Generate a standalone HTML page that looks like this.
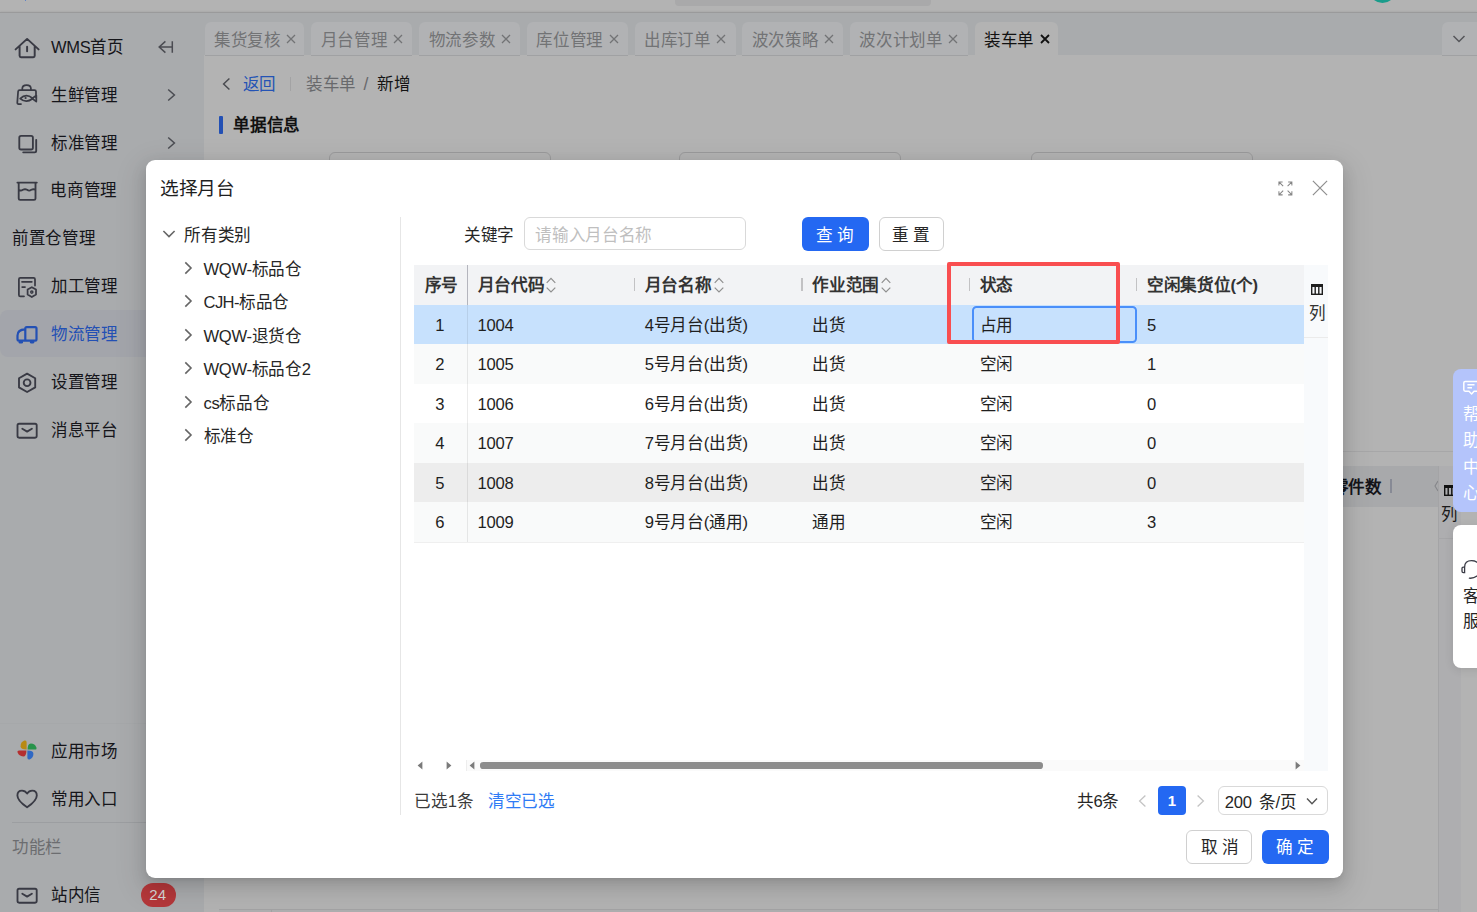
<!DOCTYPE html>
<html lang="zh-CN">
<head>
<meta charset="utf-8">
<title>装车单</title>
<style>
html,body{margin:0;padding:0}
body{width:1477px;height:912px;position:relative;overflow:hidden;background:#b3b3b3;font-family:"Liberation Sans",sans-serif;color:#141414}
*{box-sizing:border-box}
.a{position:absolute}
.t{position:absolute;white-space:nowrap;line-height:20px;height:20px;font-size:16.6px;letter-spacing:-0.3px}
.s{font-size:16.5px}
svg{position:absolute;overflow:visible}
#topstrip{left:0;top:0;width:1477px;height:12px;background:#b3b3b3}
#topline{left:0;top:11.5px;width:1477px;height:1.5px;background:#9a9a9b;box-shadow:0 -1px 1.5px rgba(0,0,0,.06)}
#side{left:0;top:13px;width:204px;height:899px;background:#a9abad}
#tabbar{left:204px;top:13px;width:1273px;height:42px;background:#a9abad}
.tab{position:absolute;top:22.3px;height:32.7px;background:#b1b2b4;border-radius:6px 6px 0 0;box-shadow:0 1px 0 #a0a1a3}
.tab .t{top:7.6px;color:#727375;font-size:16.5px}
.tab.on{background:#b3b3b3;box-shadow:none}
.tab.on .t{color:#111}
.si{color:#15151a;font-size:16.5px}
#modal{left:146px;top:160px;width:1197px;height:718px;background:#fff;border-radius:9px;box-shadow:0 6px 16px rgba(0,0,0,.13),0 3px 6px -4px rgba(0,0,0,.16),0 9px 28px 8px rgba(0,0,0,.08)}
.b{font-weight:bold}
</style>
</head>
<body>
<div class="a" id="topstrip"></div>
<div class="a" id="topline"></div>
<div class="a" id="side"></div>
<div class="a" id="tabbar"></div>
<div class="a" style="left:675px;top:0;width:256px;height:6px;background:#a9a9aa;border-radius:0 0 4px 4px"></div>
<div class="a" style="left:1369px;top:-24px;width:27px;height:27px;border-radius:50%;background:#1a9c8b"></div>
<div class="a" style="left:24.7px;top:0;width:1.6px;height:1.2px;background:#5f83c9"></div>
<div class="tab" style="left:204.5px;width:99.8px"><span class="t" style="left:9.5px">集货复核</span><svg style="left:81.8px;top:11.7px" width="10" height="10" viewBox="0 0 10 10"><path d="M1 1L9 9M9 1L1 9" stroke="#727375" stroke-width="1.3" fill="none"/></svg></div>
<div class="tab" style="left:311.1px;width:101.3px"><span class="t" style="left:9.5px">月台管理</span><svg style="left:81.8px;top:11.7px" width="10" height="10" viewBox="0 0 10 10"><path d="M1 1L9 9M9 1L1 9" stroke="#727375" stroke-width="1.3" fill="none"/></svg></div>
<div class="tab" style="left:419px;width:101.2px"><span class="t" style="left:9.5px">物流参数</span><svg style="left:81.8px;top:11.7px" width="10" height="10" viewBox="0 0 10 10"><path d="M1 1L9 9M9 1L1 9" stroke="#727375" stroke-width="1.3" fill="none"/></svg></div>
<div class="tab" style="left:526.8px;width:101.2px"><span class="t" style="left:9.5px">库位管理</span><svg style="left:81.8px;top:11.7px" width="10" height="10" viewBox="0 0 10 10"><path d="M1 1L9 9M9 1L1 9" stroke="#727375" stroke-width="1.3" fill="none"/></svg></div>
<div class="tab" style="left:634.5px;width:101.2px"><span class="t" style="left:9.5px">出库订单</span><svg style="left:81.8px;top:11.7px" width="10" height="10" viewBox="0 0 10 10"><path d="M1 1L9 9M9 1L1 9" stroke="#727375" stroke-width="1.3" fill="none"/></svg></div>
<div class="tab" style="left:742.2px;width:101.2px"><span class="t" style="left:9.5px">波次策略</span><svg style="left:81.8px;top:11.7px" width="10" height="10" viewBox="0 0 10 10"><path d="M1 1L9 9M9 1L1 9" stroke="#727375" stroke-width="1.3" fill="none"/></svg></div>
<div class="tab" style="left:849.9px;width:118.1px"><span class="t" style="left:9.5px">波次计划单</span><svg style="left:98.0px;top:11.7px" width="10" height="10" viewBox="0 0 10 10"><path d="M1 1L9 9M9 1L1 9" stroke="#727375" stroke-width="1.3" fill="none"/></svg></div>
<div class="tab on" style="left:974.5px;width:83.5px"><span class="t" style="left:9.5px">装车单</span><svg style="left:65.5px;top:11.7px" width="10" height="10" viewBox="0 0 10 10"><path d="M1 1L9 9M9 1L1 9" stroke="#111" stroke-width="1.8" fill="none"/></svg></div>
<div class="tab" style="left:1442px;width:35px;border-radius:6px 0 0 0"><svg style="left:10px;top:12px" width="14" height="10" viewBox="0 0 14 10"><path d="M1.5 2L7 7.5L12.5 2" stroke="#55565a" stroke-width="1.5" fill="none"/></svg></div>
<div class="a" style="left:0;top:310px;width:204px;height:46.6px;background:#a3a5ab;border-radius:8px 0 0 8px"></div>
<svg style="left:14px;top:36px" width="26" height="24" viewBox="14 36 26 24"><path d="M15.6 49.4L27.1 38.9L38.6 49.4M19.6 46.2V55.8Q19.6 57.2 21 57.2H33.3Q34.7 57.2 34.7 55.8V46.2M27.1 46.8V51.3" stroke="#393a44" stroke-width="1.95" fill="none" stroke-linecap="round" stroke-linejoin="round"/></svg>
<span class="t si" style="left:51px;top:37px;">WMS首页</span>
<svg style="left:157px;top:40px" width="18" height="14" viewBox="157 40 18 14"><path d="M165.4 41.4L159.2 47L165.4 52.6M159.2 47H172.3M172.3 41.2V52.8" stroke="#4b4c52" stroke-width="1.5" fill="none"/></svg>
<svg style="left:15px;top:83px" width="24" height="24" viewBox="15 83 24 24"><path d="M22.3 90V88.6Q22.3 85 26.6 85Q30.9 85 30.9 88.6V90M36 98V91.5Q36 90 34.5 90H19.6Q18.2 90 18.1 91.5L17.3 102.6Q17.2 104 18.6 104H21M20.2 98.6Q26 93 32.5 98.2L36.3 95.4V101.6L32.5 98.8Q26 103.6 20.2 98.6Z" stroke="#393a44" stroke-width="1.75" fill="none" stroke-linecap="round" stroke-linejoin="round"/><circle cx="25.6" cy="98" r="1.1" fill="#393a44"/></svg>
<span class="t si" style="left:51px;top:85px;">生鲜管理</span>
<svg style="left:167px;top:87.5px" width="9" height="14" viewBox="0 0 9 14"><path d="M1.2 1.5L7.4 7L1.2 12.5" stroke="#4b4c52" stroke-width="1.5" fill="none"/></svg>
<svg style="left:16px;top:133px" width="24" height="22" viewBox="16 133 24 22"><rect x="19.3" y="135.9" width="13.6" height="13.6" rx="1.8" stroke="#393a44" stroke-width="1.85" fill="none"/><path d="M36.2 139.8V150.7Q36.2 152.3 34.6 152.3H23.2" stroke="#393a44" stroke-width="1.85" fill="none" stroke-linecap="round"/></svg>
<span class="t si" style="left:51px;top:132.5px;">标准管理</span>
<svg style="left:167px;top:135.5px" width="9" height="14" viewBox="0 0 9 14"><path d="M1.2 1.5L7.4 7L1.2 12.5" stroke="#4b4c52" stroke-width="1.5" fill="none"/></svg>
<svg style="left:15px;top:180px" width="24" height="22" viewBox="15 180 24 22"><path d="M17.4 182.6H36.8M18.7 182.6V198.4Q18.7 199.8 20.1 199.8H34.1Q35.5 199.8 35.5 198.4V182.6M18.7 189.6Q20.5 191.4 22.9 189.8Q25 188.6 27.1 189.8Q29.2 191.4 31.3 189.8Q33.6 188.6 35.5 189.8" stroke="#393a44" stroke-width="1.85" fill="none" stroke-linecap="round" stroke-linejoin="round"/></svg>
<span class="t si" style="left:50.3px;top:180px;">电商管理</span>
<span class="t si" style="left:12px;top:228px;">前置仓管理</span>
<svg style="left:16px;top:275px" width="22" height="24" viewBox="16 275 22 24"><path d="M24 296.3H20.3Q18.9 296.3 18.9 294.9V279.3Q18.9 277.9 20.3 277.9H33.6Q35 277.9 35 279.3V285.5M22 281.8H31.8M22.2 287H25" stroke="#393a44" stroke-width="1.75" fill="none" stroke-linecap="round"/><path d="M31.8 287.2L36 289.6V294.6L31.8 297L27.6 294.6V289.6Z" stroke="#393a44" stroke-width="1.75" fill="none" stroke-linejoin="round"/><circle cx="31.8" cy="292.1" r="1.1" fill="none" stroke="#393a44" stroke-width="1.4"/></svg>
<span class="t si" style="left:51px;top:276px;">加工管理</span>
<svg style="left:15px;top:324px" width="24" height="22" viewBox="15 324 24 22"><path d="M25.3 340.6V328.6Q25.3 327.2 26.7 327.2H35.1Q36.5 327.2 36.5 328.6V339.2Q36.5 340.6 35.1 340.6H18.9Q17.5 340.6 17.5 339.2V335.4Q17.5 329.8 25 329.4" stroke="#2350b4" stroke-width="2.2" fill="none" stroke-linecap="round" stroke-linejoin="round"/><rect x="18.6" y="340.6" width="4.4" height="3" rx="1.4" fill="#2350b4"/><rect x="29.9" y="340.6" width="4.4" height="3" rx="1.4" fill="#2350b4"/></svg>
<span class="t si" style="left:51px;top:324px;color:#2350b4">物流管理</span>
<svg style="left:16px;top:371px" width="22" height="24" viewBox="16 371 22 24"><path d="M27.1 373.6L35.2 378.2V387.4L27.1 392L19 387.4V378.2Z" stroke="#393a44" stroke-width="1.85" fill="none" stroke-linejoin="round"/><circle cx="27.1" cy="382.8" r="3.4" stroke="#393a44" stroke-width="1.85" fill="none"/></svg>
<span class="t si" style="left:51px;top:372px;">设置管理</span>
<svg style="left:15px;top:421.0px" width="24" height="20" viewBox="15 421.0 24 20"><rect x="17.5" y="423.7" width="19.2" height="14" rx="1.6" stroke="#393a44" stroke-width="1.85" fill="none"/><path d="M22.3 428.8L27.1 431.59999999999997L31.9 428.8" stroke="#393a44" stroke-width="1.85" fill="none" stroke-linecap="round" stroke-linejoin="round"/></svg>
<span class="t si" style="left:51px;top:420px;">消息平台</span>
<div class="a" style="left:0;top:723px;width:204px;height:1px;background:#a6a8aa"></div>
<svg style="left:16px;top:739px" width="22" height="22" viewBox="0 0 22 22"><path d="M10.6 10.4V3.2Q10.6 1 8.4 1.6Q4.6 3 4.6 7.2Q4.6 10.4 10.6 10.4Z" fill="#b88a14"/><path d="M11.6 10.6H18.8Q21 10.6 20.4 8.4Q19 4.6 14.8 4.6Q11.6 4.6 11.6 10.6Z" fill="#27934a"/><path d="M11.4 11.6V18.8Q11.4 21 13.6 20.4Q17.4 19 17.4 14.8Q17.4 11.6 11.4 11.6Z" fill="#2f68c4"/><path d="M10.4 11.4H3.2Q1 11.4 1.6 13.6Q3 17.4 7.2 17.4Q10.4 17.4 10.4 11.4Z" fill="#b42f30"/></svg>
<span class="t si" style="left:51px;top:741px;">应用市场</span>
<svg style="left:15px;top:788px" width="24" height="22" viewBox="15 788 24 22"><path d="M27.1 807.2Q17.4 800.6 17.4 795.4Q17.4 790.6 22 790.6Q25.2 790.6 27.1 793.6Q29 790.6 32.2 790.6Q36.8 790.6 36.8 795.4Q36.8 800.6 27.1 807.2Z" stroke="#393a44" stroke-width="1.85" fill="none" stroke-linejoin="round"/></svg>
<span class="t si" style="left:51px;top:789px;">常用入口</span>
<div class="a" style="left:12px;top:822px;width:192px;height:1px;background:#9c9ea1"></div>
<span class="t si" style="left:12px;top:837px;color:#6c6d70">功能栏</span>
<svg style="left:15px;top:886.0px" width="24" height="20" viewBox="15 886.0 24 20"><rect x="17.5" y="888.7" width="19.2" height="14" rx="1.6" stroke="#393a44" stroke-width="1.85" fill="none"/><path d="M22.3 893.8000000000001L27.1 896.6L31.9 893.8000000000001" stroke="#393a44" stroke-width="1.85" fill="none" stroke-linecap="round" stroke-linejoin="round"/></svg>
<span class="t si" style="left:51px;top:885px;">站内信</span>
<div class="a" style="left:140.6px;top:883px;width:35.2px;height:23.6px;border-radius:12px;background:#b4373a"></div>
<span class="t" style="left:149.3px;top:885px;color:#d6d6d6;font-size:15px;letter-spacing:0">24</span>
<svg style="left:222px;top:77px" width="9" height="14" viewBox="0 0 9 14"><path d="M7.4 1.5L1.6 7L7.4 12.5" stroke="#4a4b50" stroke-width="1.5" fill="none"/></svg>
<span class="t s" style="left:242.5px;top:74px;color:#2453b5">返回</span>
<div class="a" style="left:290px;top:77px;width:1px;height:14px;background:#a3a3a4"></div>
<span class="t s" style="left:306px;top:74px;color:#68696c">装车单</span>
<span class="t s" style="left:363.5px;top:74px;color:#68696c;font-size:17.5px">/</span>
<span class="t s" style="left:377px;top:74px;color:#141414">新增</span>
<div class="a" style="left:218.5px;top:115.5px;width:4.7px;height:18.7px;background:#2350b4;border-radius:1px"></div>
<span class="t s b" style="left:233.3px;top:114.5px;color:#111">单据信息</span>
<div class="a" style="left:329.2px;top:152px;width:221.5px;height:34px;border:1px solid #9b9b9c;border-radius:6px;background:#b3b3b3"></div>
<div class="a" style="left:679.4px;top:152px;width:221.5px;height:34px;border:1px solid #9b9b9c;border-radius:6px;background:#b3b3b3"></div>
<div class="a" style="left:1031.2px;top:152px;width:221.5px;height:34px;border:1px solid #9b9b9c;border-radius:6px;background:#b3b3b3"></div>
<div class="a" style="left:204px;top:451px;width:1273px;height:1px;background:#a7a7a8"></div>
<div class="a" style="left:204px;top:466px;width:1233.5px;height:40.6px;background:#a8a9ab"></div>
<span class="t s b" style="left:1331.6px;top:477px;color:#15151a">零件数</span>
<div class="a" style="left:1389.9px;top:479.3px;width:1.9px;height:13.5px;background:#878a95"></div>
<svg style="left:1434px;top:480px" width="4" height="12" viewBox="0 0 4 12"><path d="M4 1L1 6L4 11" stroke="#85868a" stroke-width="1.1" fill="none"/></svg>
<div class="a" style="left:1437.5px;top:466px;width:23.5px;height:446px;background:#aeaeb0;border-left:1px solid #a4a4a6"></div>
<div class="a" style="left:1438px;top:537.5px;width:23px;height:1px;background:#a6a6a8"></div>
<svg style="left:1443.5px;top:485.4px" width="12" height="11" viewBox="0 0 12 11"><rect x="0.7" y="0.7" width="10.6" height="9.6" fill="none" stroke="#111" stroke-width="1.4"/><rect x="0" y="0" width="12" height="3" fill="#111"/><path d="M4.2 2V10M7.8 2V10" stroke="#111" stroke-width="1.4"/></svg>
<span class="t s" style="left:1441px;top:503.8px;color:#1a1a1a">列</span>
<div class="a" style="left:218.5px;top:909px;width:1219px;height:1px;background:#a3a3a4"></div>
<div class="a" style="left:218.5px;top:910px;width:1219px;height:2px;background:#afafb0"></div>
<div class="a" style="left:271px;top:909px;width:1px;height:3px;background:#a3a3a4"></div>
<div class="a" id="modal"></div>
<span class="t" style="left:160px;top:177px;font-size:18.7px;line-height:24px;height:24px;color:#1f1f1f">选择月台</span>
<svg style="left:1277.7px;top:180.9px" width="14.8" height="14.8" viewBox="0 0 16 16"><g stroke="#858585" stroke-width="1.1" fill="none"><path d="M1 5V1H5M1 1L5.6 5.6"/><path d="M11 1H15V5M15 1L10.4 5.6"/><path d="M1 11V15H5M1 15L5.6 10.4"/><path d="M15 11V15H11M15 15L10.4 10.4"/></g></svg>
<svg style="left:1312px;top:180.2px" width="16" height="16" viewBox="0 0 16 16"><path d="M0.9 0.9L15.1 15.1M15.1 0.9L0.9 15.1" stroke="#8e8e8e" stroke-width="1.2" fill="none"/></svg>
<svg style="left:162px;top:229px" width="14" height="10" viewBox="0 0 14 10"><path d="M1.4 2L7 7.6L12.6 2" stroke="#666" stroke-width="1.6" fill="none"/></svg>
<span class="t" style="left:184.3px;top:226px;color:#262626">所有类别</span>
<svg style="left:184px;top:260.8px" width="9" height="14" viewBox="0 0 9 14"><path d="M1.3 1.4L7 7L1.3 12.6" stroke="#666" stroke-width="1.6" fill="none"/></svg>
<span class="t" style="left:203.5px;top:260px;color:#262626">WQW-标品仓</span>
<svg style="left:184px;top:294.3px" width="9" height="14" viewBox="0 0 9 14"><path d="M1.3 1.4L7 7L1.3 12.6" stroke="#666" stroke-width="1.6" fill="none"/></svg>
<span class="t" style="left:203.5px;top:293px;color:#262626"><span style="letter-spacing:-0.6px">CJH-</span>标品仓</span>
<svg style="left:184px;top:327.8px" width="9" height="14" viewBox="0 0 9 14"><path d="M1.3 1.4L7 7L1.3 12.6" stroke="#666" stroke-width="1.6" fill="none"/></svg>
<span class="t" style="left:203.5px;top:327px;color:#262626">WQW-退货仓</span>
<svg style="left:184px;top:361.3px" width="9" height="14" viewBox="0 0 9 14"><path d="M1.3 1.4L7 7L1.3 12.6" stroke="#666" stroke-width="1.6" fill="none"/></svg>
<span class="t" style="left:203.5px;top:360px;color:#262626">WQW-标品仓2</span>
<svg style="left:184px;top:394.8px" width="9" height="14" viewBox="0 0 9 14"><path d="M1.3 1.4L7 7L1.3 12.6" stroke="#666" stroke-width="1.6" fill="none"/></svg>
<span class="t" style="left:203.5px;top:394px;color:#262626">cs标品仓</span>
<svg style="left:184px;top:428.3px" width="9" height="14" viewBox="0 0 9 14"><path d="M1.3 1.4L7 7L1.3 12.6" stroke="#666" stroke-width="1.6" fill="none"/></svg>
<span class="t" style="left:203.5px;top:427px;color:#262626">标准仓</span>
<div class="a" style="left:399.5px;top:217px;width:1px;height:597.5px;background:#e6e6e6"></div>
<span class="t" style="left:464px;top:226px;color:#262626">关键字</span>
<div class="a" style="left:524px;top:217px;width:221.5px;height:33.4px;border:1px solid #d9d9d9;border-radius:6px;background:#fff"></div>
<span class="t" style="left:535.3px;top:226px;color:#bfbfbf">请输入月台名称</span>
<div class="a" style="left:802.3px;top:217px;width:66.3px;height:33.6px;border-radius:6px;background:#2468f2"></div>
<span class="t" style="left:816px;top:226px;color:#fff">查 询</span>
<div class="a" style="left:878.5px;top:217px;width:65.3px;height:33.6px;border-radius:6px;background:#fff;border:1px solid #d0d0d0"></div>
<span class="t" style="left:892px;top:226px;color:#262626">重 置</span>
<div class="a" style="left:414px;top:265px;width:890px;height:40px;background:#f2f3f5"></div>
<span class="t b" style="left:424.5px;top:276px;color:#333">序号</span>
<span class="t b" style="left:477.6px;top:276px;color:#333">月台代码</span>
<svg style="left:546.4px;top:277.2px" width="10" height="16" viewBox="0 0 10 16"><path d="M0.7 5.8L5 1.4L9.3 5.8M0.7 10.6L5 15L9.3 10.6" stroke="#8f8f8f" stroke-width="1.2" fill="none"/></svg>
<span class="t b" style="left:644.8px;top:276px;color:#333">月台名称</span>
<div class="a" style="left:633.9px;top:277.5px;width:1.3px;height:13.5px;background:#c2c2c4"></div>
<svg style="left:713.6px;top:277.2px" width="10" height="16" viewBox="0 0 10 16"><path d="M0.7 5.8L5 1.4L9.3 5.8M0.7 10.6L5 15L9.3 10.6" stroke="#8f8f8f" stroke-width="1.2" fill="none"/></svg>
<span class="t b" style="left:812.3px;top:276px;color:#333">作业范围</span>
<div class="a" style="left:801.4px;top:277.5px;width:1.3px;height:13.5px;background:#c2c2c4"></div>
<svg style="left:881.1px;top:277.2px" width="10" height="16" viewBox="0 0 10 16"><path d="M0.7 5.8L5 1.4L9.3 5.8M0.7 10.6L5 15L9.3 10.6" stroke="#8f8f8f" stroke-width="1.2" fill="none"/></svg>
<span class="t b" style="left:979.7px;top:276px;color:#333">状态</span>
<div class="a" style="left:968.8px;top:277.5px;width:1.3px;height:13.5px;background:#c2c2c4"></div>
<span class="t b" style="left:1147.1px;top:276px;color:#333">空闲集货位(个)</span>
<div class="a" style="left:1136.2px;top:277.5px;width:1.3px;height:13.5px;background:#c2c2c4"></div>
<div class="a" style="left:414px;top:305.00px;width:890px;height:39.48px;background:#c7e1fd"></div>
<span class="t" style="left:413.2px;top:316px;width:53px;text-align:center;color:#1f1f1f">1</span>
<span class="t" style="left:477.6px;top:316px;color:#1f1f1f">1004</span>
<span class="t" style="left:644.8px;top:316px;color:#1f1f1f">4号月台(出货)</span>
<span class="t" style="left:812.3px;top:316px;color:#1f1f1f">出货</span>
<span class="t" style="left:979.7px;top:316px;color:#1f1f1f">占用</span>
<span class="t" style="left:1147.1px;top:316px;color:#1f1f1f">5</span>
<div class="a" style="left:414px;top:344.48px;width:890px;height:39.48px;background:#f9fafa"></div>
<span class="t" style="left:413.2px;top:355px;width:53px;text-align:center;color:#1f1f1f">2</span>
<span class="t" style="left:477.6px;top:355px;color:#1f1f1f">1005</span>
<span class="t" style="left:644.8px;top:355px;color:#1f1f1f">5号月台(出货)</span>
<span class="t" style="left:812.3px;top:355px;color:#1f1f1f">出货</span>
<span class="t" style="left:979.7px;top:355px;color:#1f1f1f">空闲</span>
<span class="t" style="left:1147.1px;top:355px;color:#1f1f1f">1</span>
<div class="a" style="left:414px;top:383.96px;width:890px;height:39.48px;background:#ffffff"></div>
<span class="t" style="left:413.2px;top:395px;width:53px;text-align:center;color:#1f1f1f">3</span>
<span class="t" style="left:477.6px;top:395px;color:#1f1f1f">1006</span>
<span class="t" style="left:644.8px;top:395px;color:#1f1f1f">6号月台(出货)</span>
<span class="t" style="left:812.3px;top:395px;color:#1f1f1f">出货</span>
<span class="t" style="left:979.7px;top:395px;color:#1f1f1f">空闲</span>
<span class="t" style="left:1147.1px;top:395px;color:#1f1f1f">0</span>
<div class="a" style="left:414px;top:423.44px;width:890px;height:39.48px;background:#f9fafa"></div>
<span class="t" style="left:413.2px;top:434px;width:53px;text-align:center;color:#1f1f1f">4</span>
<span class="t" style="left:477.6px;top:434px;color:#1f1f1f">1007</span>
<span class="t" style="left:644.8px;top:434px;color:#1f1f1f">7号月台(出货)</span>
<span class="t" style="left:812.3px;top:434px;color:#1f1f1f">出货</span>
<span class="t" style="left:979.7px;top:434px;color:#1f1f1f">空闲</span>
<span class="t" style="left:1147.1px;top:434px;color:#1f1f1f">0</span>
<div class="a" style="left:414px;top:462.92px;width:890px;height:39.48px;background:#ededed"></div>
<span class="t" style="left:413.2px;top:474px;width:53px;text-align:center;color:#1f1f1f">5</span>
<span class="t" style="left:477.6px;top:474px;color:#1f1f1f">1008</span>
<span class="t" style="left:644.8px;top:474px;color:#1f1f1f">8号月台(出货)</span>
<span class="t" style="left:812.3px;top:474px;color:#1f1f1f">出货</span>
<span class="t" style="left:979.7px;top:474px;color:#1f1f1f">空闲</span>
<span class="t" style="left:1147.1px;top:474px;color:#1f1f1f">0</span>
<div class="a" style="left:414px;top:502.40px;width:890px;height:39.48px;background:#f9fafa"></div>
<span class="t" style="left:413.2px;top:513px;width:53px;text-align:center;color:#1f1f1f">6</span>
<span class="t" style="left:477.6px;top:513px;color:#1f1f1f">1009</span>
<span class="t" style="left:644.8px;top:513px;color:#1f1f1f">9号月台(通用)</span>
<span class="t" style="left:812.3px;top:513px;color:#1f1f1f">通用</span>
<span class="t" style="left:979.7px;top:513px;color:#1f1f1f">空闲</span>
<span class="t" style="left:1147.1px;top:513px;color:#1f1f1f">3</span>
<div class="a" style="left:414px;top:541.9px;width:890px;height:1px;background:#efefef"></div>
<div class="a" style="left:466.8px;top:265px;width:1px;height:40px;background:#b4b5bd"></div>
<div class="a" style="left:466.8px;top:305px;width:1px;height:236.9px;background:rgba(0,0,0,.08)"></div>
<div class="a" style="left:1303.5px;top:305px;width:1px;height:465px;background:#f0f0f0"></div>
<div class="a" style="left:1304px;top:265px;width:24px;height:505.5px;background:#f8fafc"></div>
<div class="a" style="left:1304px;top:336.5px;width:24px;height:1px;background:#ebebeb"></div>
<svg style="left:1310.6px;top:284.4px" width="12" height="11" viewBox="0 0 12 11"><rect x="0.7" y="0.7" width="10.6" height="9.6" fill="none" stroke="#1f1f1f" stroke-width="1.4"/><rect x="0" y="0" width="12" height="3" fill="#1f1f1f"/><path d="M4.2 2V10M7.8 2V10" stroke="#1f1f1f" stroke-width="1.4"/></svg>
<span class="t" style="left:1308.6px;top:303.5px;color:#333">列</span>
<div class="a" style="left:971.6px;top:305.9px;width:165.1px;height:37.6px;border:2px solid #4a8ffa;border-radius:4.5px"></div>
<div class="a" style="left:947.1px;top:261.8px;width:173.2px;height:82.25px;border:4.15px solid #f94e50;border-radius:2px"></div>
<div class="a" style="left:466px;top:759.5px;width:838px;height:11px;background:#fafafa"></div>
<div class="a" style="left:466px;top:759.5px;width:1px;height:11px;background:#ededed"></div>
<svg style="left:416.6px;top:760.8px" width="6" height="9" viewBox="0 0 6 9"><path d="M5.4 0.6V8.4L0.6 4.5Z" fill="#7a7a7a"/></svg>
<svg style="left:446px;top:760.8px" width="6" height="9" viewBox="0 0 6 9"><path d="M0.6 0.6V8.4L5.4 4.5Z" fill="#7a7a7a"/></svg>
<svg style="left:469.2px;top:760.8px" width="6" height="9" viewBox="0 0 6 9"><path d="M5.4 0.6V8.4L0.6 4.5Z" fill="#7a7a7a"/></svg>
<svg style="left:1295px;top:760.8px" width="6" height="9" viewBox="0 0 6 9"><path d="M0.6 0.6V8.4L5.4 4.5Z" fill="#7a7a7a"/></svg>
<div class="a" style="left:480.2px;top:762.4px;width:563.2px;height:6.2px;border-radius:3.1px;background:#8c8c8c"></div>
<span class="t" style="left:414.3px;top:792px;color:#3a3a3a">已选1条</span>
<span class="t" style="left:488px;top:792px;color:#2f7bf5">清空已选</span>
<span class="t" style="left:1076.8px;top:792px;color:#262626">共6条</span>
<svg style="left:1138px;top:794px" width="9" height="14" viewBox="0 0 9 14"><path d="M7.4 1.5L1.6 7L7.4 12.5" stroke="#c4c4c4" stroke-width="1.3" fill="none"/></svg>
<div class="a" style="left:1157.6px;top:786.3px;width:28.4px;height:28.4px;border-radius:4px;background:#2468f2"></div>
<span class="t" style="left:1157.6px;top:791.3px;width:28.4px;text-align:center;color:#fff;font-size:15px;font-weight:bold">1</span>
<svg style="left:1196px;top:794px" width="9" height="14" viewBox="0 0 9 14"><path d="M1.6 1.5L7.4 7L1.6 12.5" stroke="#c4c4c4" stroke-width="1.3" fill="none"/></svg>
<div class="a" style="left:1217.5px;top:786.3px;width:110.3px;height:28.4px;border-radius:6px;border:1px solid #d9d9d9;background:#fff"></div>
<span class="t" style="left:1224.8px;top:793px;color:#262626;word-spacing:3px">200 条/页</span>
<svg style="left:1305.5px;top:796.5px" width="12" height="9" viewBox="0 0 12 9"><path d="M1 1.6L6 6.8L11 1.6" stroke="#555" stroke-width="1.4" fill="none"/></svg>
<div class="a" style="left:1186.3px;top:830.2px;width:66.2px;height:33.6px;border-radius:6px;border:1px solid #d0d0d0;background:#fff"></div>
<span class="t" style="left:1200.8px;top:838.4px;color:#262626">取 消</span>
<div class="a" style="left:1261.9px;top:830.2px;width:67.2px;height:33.6px;border-radius:6px;background:#2468f2"></div>
<span class="t" style="left:1276.4px;top:838.4px;color:#fff">确 定</span>
<div class="a" style="left:1453.3px;top:368.8px;width:30px;height:143.5px;border-radius:8px 0 0 8px;background:#b4c4fb"></div>
<svg style="left:1462.5px;top:380px" width="16" height="16" viewBox="0 0 16 16"><path d="M16 1.4H2.2Q0.8 1.4 0.8 2.8V9.8Q0.8 11.2 2.2 11.2H6L8.6 14L11 11.2H16M4.4 4.8H11.5M4.4 7.8H9" stroke="#fff" stroke-width="1.5" fill="none" stroke-linejoin="round"/></svg>
<span class="t s" style="left:1463px;top:404px;color:#fff">帮</span>
<span class="t s" style="left:1463px;top:430px;color:#fff">助</span>
<span class="t s" style="left:1463px;top:457px;color:#fff">中</span>
<span class="t s" style="left:1463px;top:483px;color:#fff">心</span>
<div class="a" style="left:1453.2px;top:524.5px;width:30px;height:143px;border-radius:8px 0 0 8px;background:#fff;box-shadow:0 2px 10px rgba(0,0,0,.10)"></div>
<svg style="left:1461px;top:559px" width="18" height="21" viewBox="0 0 18 21"><path d="M3.6 8.2Q3.6 1.6 10.6 1.6Q15 1.6 17.4 4.6M3.6 8.2H2.4Q1 8.2 1 9.6V12.2Q1 13.6 2.4 13.6H3.6ZM8.4 19.2Q12.6 19.6 16 17" stroke="#3a3b46" stroke-width="1.3" fill="none" stroke-linecap="round"/></svg>
<span class="t s" style="left:1463px;top:586.3px;color:#262626">客</span>
<span class="t s" style="left:1463px;top:610.6px;color:#262626">服</span>
</body>
</html>
